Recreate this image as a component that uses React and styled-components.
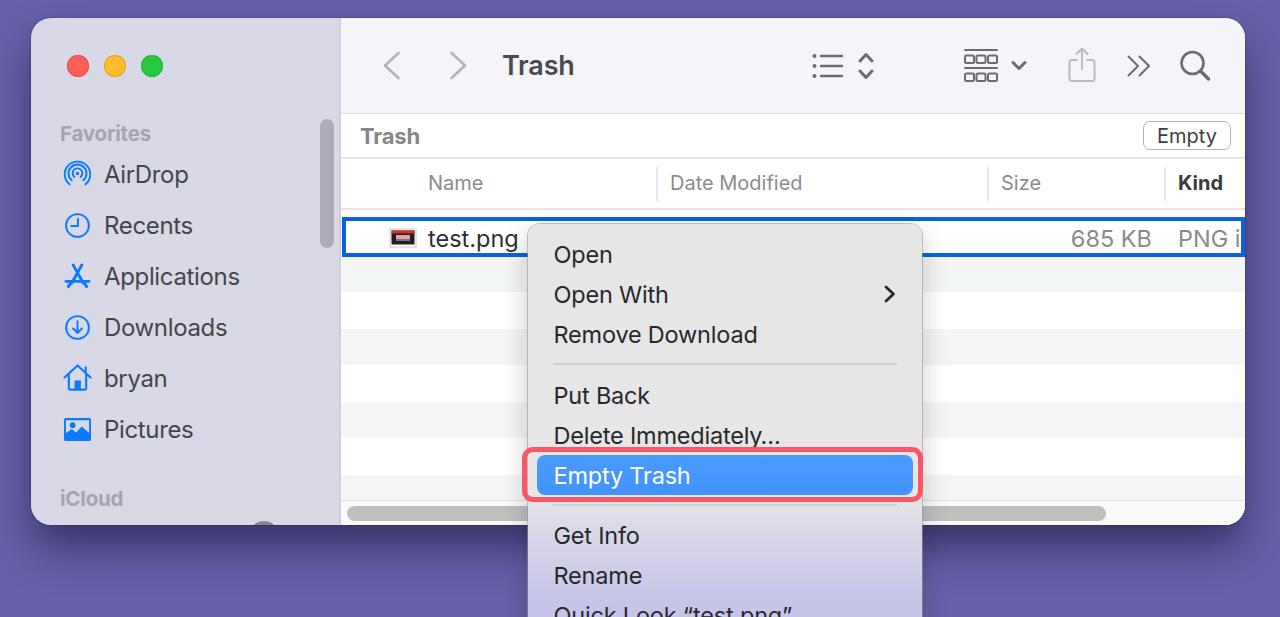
import React from "react";
import styled, { createGlobalStyle } from "styled-components";

const Global = createGlobalStyle`
  html, body { margin: 0; padding: 0; height: 617px; overflow: hidden; }
  body { font-family: Inter, "Liberation Sans", sans-serif; background: #625da4; }
`;
const Page = styled.div`
  width: 1280px; height: 617px; padding: 18px 35px 0 31px; box-sizing: border-box;
  position: relative; overflow: hidden;
  background: #6661a8;
`;
const Window = styled.div`
  width: 1214px; height: 507px; display: flex; border-radius: 20px; overflow: hidden;
  box-shadow: 0 24px 40px -2px rgba(25, 22, 60, 0.6), 0 0 2px rgba(25,22,60,.7);
`;
const Sidebar = styled.aside`
  width: 310px; flex: none; background: #d9d8e6; border-right: 2px solid #cfced9; box-sizing: border-box;
  padding: 37px 0 0 36px; position: relative; overflow: hidden;
`;
const Lights = styled.div`display: flex; gap: 15px; margin-bottom: 45px;`;
const Light = styled.span`
  width: 22px; height: 22px; border-radius: 50%; background: ${p => p.$c};
  box-shadow: inset 0 0 0 1px ${p => p.$b};
`;
const GroupTitle = styled.div`
  font-size: 20.5px; font-weight: 700; color: #a5a4b1; line-height: 24px; margin-left: -7px;
  margin-bottom: ${p => p.$mb || 0}px; margin-top: ${p => p.$mt || 0}px; letter-spacing: -0.2px;
`;
const SideItem = styled.div`
  height: 51px; display: flex; align-items: center; gap: 11px; color: #46454c; font-size: 24px;
  letter-spacing: -0.35px; margin-left: -4px;
  svg { width: 29px; height: 29px; flex: none; color: #0a7aff; margin-right: 1px; }
`;
const SideScroll = styled.div`
  position: absolute; right: 5px; top: 101px; width: 14px; height: 129px; border-radius: 7px; background: #adabb7;
`;
const Peek = styled.div`
  position: absolute; left: 222px; bottom: -10px; width: 22px; height: 14px; border-radius: 50%; background: #85848d;
`;
const Main = styled.main`flex: 1; display: flex; flex-direction: column; background: #fff; min-width: 0; position: relative;`;
const Toolbar = styled.header`
  height: 96px; flex: none; background: #f4f4f9; border-bottom: 1px solid #dfdfe2; box-sizing: border-box;
  display: flex; align-items: center; color: #6c6c70; position: relative;
`;
const Tool = styled.span`
  display: flex; flex: none; margin-left: ${p => p.$ml}px; color: ${p => p.$c || "#6c6c70"};
`;
const Title = styled.h1`
  margin: 0 0 0 34px; font-size: 27px; font-weight: 600; color: #4a4a4e; letter-spacing: -0.2px;
`;
const PathBar = styled.div`
  height: 45px; flex: none; box-sizing: border-box; border-bottom: 2px solid #e6e6e6;
  display: flex; align-items: center; justify-content: space-between; padding: 0 14px 0 19px;
`;
const PathTitle = styled.div`font-size: 22px; font-weight: 700; color: #868688; letter-spacing: -0.2px;`;
const EmptyBtn = styled.button`
  width: 88px; height: 29px; border: 1.5px solid #b4b4b4; border-radius: 7px; background: #fff; padding: 0;
  font: 400 20px Inter, sans-serif; color: #3f3f42; letter-spacing: 0;
`;
const Head = styled.div`
  height: 51px; flex: none; box-sizing: border-box; border-bottom: 2px solid #e6e6e6;
  display: grid; grid-template-columns: 315px 331px 177px 1fr; align-items: center;
`;
const HeadCell = styled.div`
  height: 34px; display: flex; align-items: center; box-sizing: border-box; font-size: 20px;
  padding: 0 0 2px ${p => (p.$first ? 87 : 12)}px;
  border-left: ${p => (p.$first ? "none" : "2px solid #e6e6e6")};
  color: ${p => (p.$bold ? "#3a3a3c" : "#8b8b8d")}; font-weight: ${p => (p.$bold ? 700 : 400)};
`;
const Rows = styled.div`
  flex: 1; display: flex; flex-direction: column; padding-top: 7px; overflow: hidden; min-height: 0;
`;
const SelectedRow = styled.div`
  height: 40px; flex: none; box-sizing: border-box; border: 4px solid #0a63dc; margin: 0 0 -1.5px 1px; background: #fff;
  display: grid; grid-template-columns: 1fr 89px; align-items: center; font-size: 23.5px; overflow: hidden; position: relative;
  padding-top: 2px; z-index: 1;
`;
const NameCell = styled.div`display: flex; align-items: center; gap: 11px; padding-left: 43px; color: #2d2d30;`;
const Thumb = styled.svg`width: 28px; height: 20px; flex: none;`;
const SizeText = styled.span`margin-left: auto; color: #8a8a8c;`;
const KindCell = styled.div`color: #8a8a8c; padding-left: 26px; white-space: nowrap; overflow: hidden;`;
const Row = styled.div`height: 36.5px; flex: none; background: ${p => (p.$alt ? "#f4f5f5" : "#fff")};`;
const HScroll = styled.div`
  position: absolute; left: 0; right: 0; bottom: 0; height: 25px; background: #fafafa; border-top: 1px solid #e2e2e2;
  box-sizing: border-box; padding: 5px 139px 0 6px; z-index: 1;
`;
const HThumb = styled.div`height: 15px; background: #bfbfbf; border-radius: 8px;`;
const Menu = styled.div`
  position: absolute; left: 528px; top: 224px; width: 394px; height: 420px; box-sizing: border-box;
  border-radius: 12px 12px 0 0; padding: 10px 0; z-index: 2;
  background: linear-gradient(180deg, #e6e6e7 0, #e6e6e7 272px, #d8d6e9 312px, #c6c4e9 380px);
  box-shadow: 0 0 0 1px rgba(150,150,155,.55), 0 8px 26px rgba(0,0,0,.22);
`;
const MenuItem = styled.div`
  height: 40px; display: flex; align-items: center; justify-content: space-between; padding: 0 26px 0 25.5px;
  font-size: 23.5px; letter-spacing: -0.2px; color: #28282a; white-space: nowrap; box-sizing: border-box;
  svg { width: 14px; height: 20px; margin-right: -1px; }
`;
const Sep = styled.div`height: 2px; margin: 9px 25px ${p => p.$after}px; background: #cfcfd3;`;
const Active = styled.div`
  height: 40px; margin: 0 9px; padding: 0 16.5px; display: flex; align-items: center; box-sizing: border-box;
  border-radius: 8px; background: linear-gradient(#4a9bff, #4393ff); color: #fff; font-size: 23.5px; letter-spacing: -0.2px;
`;
const Callout = styled.div`
  position: absolute; left: 522px; top: 447px; width: 401px; height: 55px; box-sizing: border-box;
  border: 5px solid #fb5568; border-radius: 11px; pointer-events: none; z-index: 3;
`;

const s = { fill: "none", stroke: "currentColor", strokeLinecap: "round", strokeLinejoin: "round" };
const AirDrop = () => (
  <svg viewBox="0 0 30 30" {...s} strokeWidth="2">
    <circle cx="15" cy="14" r="1.8" fill="currentColor" stroke="none" />
    <path d="M11.8 17.5a5 5 0 1 1 6.4 0M9 21a9.3 9.3 0 1 1 12 0M6.8 25.2a13.2 13.2 0 1 1 16.4 0" />
  </svg>
);
const Clock = () => (
  <svg viewBox="0 0 30 30" {...s} strokeWidth="2"><circle cx="15" cy="15" r="11.8" /><path d="M15.5 8v7.5H8.5" /></svg>
);
const Apps = () => (
  <svg viewBox="0 0 30 30" {...s} strokeWidth="3">
    <path d="M10.5 3 21 22M19.5 3 9 22M3 20h24M5.5 25.5 7.5 22.5M24.5 25.5l-2-3" />
  </svg>
);
const Download = () => (
  <svg viewBox="0 0 30 30" {...s} strokeWidth="2"><circle cx="15" cy="15" r="11.8" /><path d="M15 8.5v12M10.5 16l4.500 4.700 4.500-4.700" /></svg>
);
const Home = () => (
  <svg viewBox="0 1 30 30" {...s} strokeWidth="2.200">
    <path d="M1.5 15 15 2.500 28.500 15M6 11.500V25.500a2 2 0 0 0 2 2h14a2 2 0 0 0 2-2V11.500M23.500 4.500V9" />
    <rect x="12" y="18" width="6.500" height="9" fill="currentColor" stroke="none" />
  </svg>
);
const Photo = () => (
  <svg viewBox="0 0 30 30">
    <path fillRule="evenodd" fill="currentColor" d="M3 3h24a2 2 0 0 1 2 2v20a2 2 0 0 1-2 2H3a2 2 0 0 1-2-2V5a2 2 0 0 1 2-2Zm0 2.500V19l6-4.500 4.500 3.500 6-6 7.500 6.500V5.500Z" />
    <circle cx="10" cy="10.500" r="3" fill="currentColor" />
  </svg>
);
const Chevron = ({ d, w = 30, h = 34, sw = 2.6 }) => (
  <svg width={w} height={h} viewBox={`0 0 ${w} ${h}`} {...s} strokeWidth={sw}><path d={d} /></svg>
);
const ListIcon = () => (
  <svg width="32" height="26" viewBox="0 0 32 26" {...s} strokeWidth="2.400">
    <path d="M9 3h21M9 13h21M9 23h21" />
    <g fill="currentColor" stroke="none"><circle cx="2.500" cy="3" r="2" /><circle cx="2.500" cy="13" r="2" /><circle cx="2.500" cy="23" r="2" /></g>
  </svg>
);
const Updown = () => (
  <svg width="16" height="28" viewBox="0 0 16 28" {...s} strokeWidth="3"><path d="M2 9l6-6.500 6 6.500M2 19l6 6.500 6-6.500" /></svg>
);
const Gallery = () => (
  <svg width="34" height="34" viewBox="0 0 34 34" {...s} strokeWidth="2">
    <path d="M1 1h32M1 19h32" />
    {[1, 12.5, 24].map(x => <rect key={x} x={x} y="6.500" width="9" height="7.500" rx="1.500" />)}
    {[1, 12.5, 24].map(x => <rect key={x + "b"} x={x} y="24.500" width="9" height="7.500" rx="1.500" />)}
  </svg>
);
const Share = () => (
  <svg width="28" height="36" viewBox="0 1 28 36" {...s} strokeWidth="2">
    <path d="M9 13H4a2.500 2.500 0 0 0-2.500 2.500v16A2.500 2.500 0 0 0 4 34h20a2.500 2.500 0 0 0 2.500-2.500v-16A2.500 2.500 0 0 0 24 13h-5M14 22V2M8.500 7 14 1.500 19.500 7" />
  </svg>
);
const More = () => (
  <svg width="24" height="22" viewBox="0 0 24 22" {...s} strokeWidth="2"><path d="M1.500 1.500 11 11l-9.500 9.500M12.500 1.500 22 11l-9.500 9.500" /></svg>
);
const Search = () => (
  <svg width="32" height="32" viewBox="0 0 32 32" {...s} strokeWidth="2.600"><circle cx="13.500" cy="13" r="11" /><path d="M21.500 21l8 8" strokeWidth="3.400" /></svg>
);

const side = [["AirDrop", AirDrop], ["Recents", Clock], ["Applications", Apps], ["Downloads", Download], ["bryan", Home], ["Pictures", Photo]];

export default function App() {
  return (
    <Page>
      <Global />
      <Window>
        <Sidebar>
          <Lights>
            <Light $c="#ff5f57" $b="#e5534c" />
            <Light $c="#febc2e" $b="#e2a52a" />
            <Light $c="#28c840" $b="#2ab53e" />
          </Lights>
          <GroupTitle $mb={3}>Favorites</GroupTitle>
          {side.map(([t, I]) => <SideItem key={t}><I />{t}</SideItem>)}
          <GroupTitle $mt={32}>iCloud</GroupTitle>
          <SideScroll />
          <Peek />
        </Sidebar>
        <Main>
          <Toolbar>
            <Tool $ml={40} $c="#b4b4b7"><Chevron w={20} d="M17.500 4 4 16.500 17.500 29" /></Tool>
            <Tool $ml={47} $c="#b4b4b7"><Chevron w={20} d="M3.500 4 17 16.500 3.500 29" /></Tool>
            <Title>Trash</Title>
            <Tool $ml={237}><ListIcon /></Tool>
            <Tool $ml={14}><Updown /></Tool>
            <Tool $ml={90}><Gallery /></Tool>
            <Tool $ml={13}><Chevron w={16} h={12} sw={3} d="M2 2.500l6 6 6-6" /></Tool>
            <Tool $ml={41} $c="#bcbcbe"><Share /></Tool>
            <Tool $ml={31}><More /></Tool>
            <Tool $ml={28}><Search /></Tool>
          </Toolbar>
          <PathBar>
            <PathTitle>Trash</PathTitle>
            <EmptyBtn>Empty</EmptyBtn>
          </PathBar>
          <Head>
            <HeadCell $first>Name</HeadCell>
            <HeadCell>Date Modified</HeadCell>
            <HeadCell>Size</HeadCell>
            <HeadCell $bold>Kind</HeadCell>
          </Head>
          <Rows>
            <SelectedRow>
              <NameCell>
                <Thumb viewBox="0 0 28 20">
                  <rect x="1" y="1" width="26" height="18" fill="#fff" stroke="#c9c9c9" />
                  <rect x="2.500" y="2.500" width="23" height="14" fill="#241d1f" />
                  <rect x="2.500" y="2.500" width="23" height="3" fill="#c5352c" />
                  <rect x="7" y="7" width="14" height="4" fill="#e5a39b" />
                  <rect x="7" y="11" width="14" height="2" fill="#777" />
                </Thumb>
                test.png
                <SizeText>685 KB</SizeText>
              </NameCell>
              <KindCell>PNG image</KindCell>
            </SelectedRow>
            {[1, 0, 1, 0, 1, 0, 1].map((a, i) => <Row key={i} $alt={a} />)}
          </Rows>
          <HScroll><HThumb /></HScroll>
        </Main>
      </Window>
      <Menu>
        <MenuItem>Open</MenuItem>
        <MenuItem>Open With
          <svg viewBox="0 0 14 20" fill="none" stroke="#2a2a2c" strokeWidth="2.800" strokeLinecap="round" strokeLinejoin="round"><path d="M3 3l7.500 7L3 17" /></svg>
        </MenuItem>
        <MenuItem>Remove Download</MenuItem>
        <Sep $after={10} />
        <MenuItem>Put Back</MenuItem>
        <MenuItem>Delete Immediately…</MenuItem>
        <Active>Empty Trash</Active>
        <Sep $after={9} />
        <MenuItem>Get Info</MenuItem>
        <MenuItem>Rename</MenuItem>
        <MenuItem>Quick Look “test.png”</MenuItem>
      </Menu>
      <Callout />
    </Page>
  );
}
